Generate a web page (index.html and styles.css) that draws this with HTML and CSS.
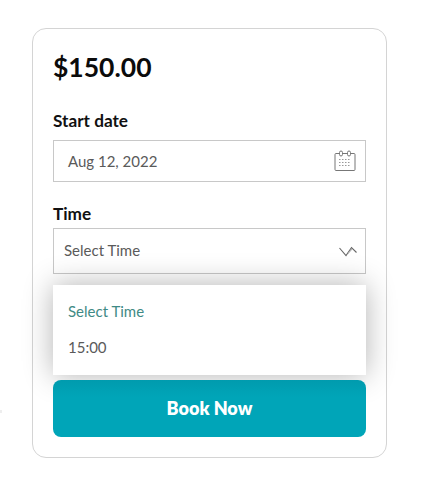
FILE: index.html
```html
<!DOCTYPE html>
<html lang="en">
<head>
<meta charset="utf-8">
<title>Book</title>
<link rel="stylesheet" href="styles.css">
</head>
<body>
<span class="speck"></span>
<main class="card">
  <div class="price">$150.00</div>
  <label class="label label-date">Start date</label>
  <div class="field date-field">
    <span>Aug 12, 2022</span>
    <svg class="cal" width="22" height="22" viewBox="0 0 22 22" fill="none" stroke="#777" stroke-width="1">
      <path d="M5.500 3.500H2a1 1 0 0 0-1 1v15a1 1 0 0 0 1 1h18a1 1 0 0 0 1-1v-15a1 1 0 0 0-1-1h-3.500M8.500 3.500h5"/>
      <rect x="5.500" y="1" width="3" height="5" rx="1.500"/>
      <rect x="13.500" y="1" width="3" height="5" rx="1.500"/>
      <path d="M5 9.500h12M5 12.500h12M5 15.500h12" stroke-dasharray="1.500 1.500" stroke="#999"/>
    </svg>
  </div>
  <label class="label label-time">Time</label>
  <div class="select-wrap">
    <div class="field select-field">
      <span>Select Time</span>
      <svg class="chev" width="18" height="11" viewBox="0 0 18 11" fill="none" stroke="#666" stroke-width="1.100">
        <path d="M0.500 2 7 9.500 12.500 1.500 17.500 6.500"/>
        <path d="M9 7.500 13 3" stroke="#aaa"/>
      </svg>
    </div>
    <ul class="menu">
      <li class="opt opt-active">Select Time</li>
      <li class="opt">15:00</li>
    </ul>
  </div>
  <button class="book">Book Now</button>
</main>
</body>
</html>
```
FILE: styles.css
```css
* { box-sizing: border-box; }
html, body { margin: 0; background: #fff; }
body {
  width: 421px;
  height: 489px;
  padding: 28px 0 0 32px;
  font-family: "Lato", "Open Sans", sans-serif;
  overflow: hidden;
  position: relative;
}
.speck {
  position: absolute;
  left: 0;
  top: 410px;
  width: 2px;
  height: 3px;
  background: #eee;
}
.card {
  width: 355px;
  height: 430px;
  border: 1px solid #d4d4d4;
  border-radius: 14px;
  padding: 21px 20px 20px;
  background: #fff;
  display: flex;
  flex-direction: column;
}
.price {
  font-size: 26.500px;
  line-height: 34px;
  font-weight: 700;
  color: #0b0b0b;
  height: 34px;
}
.label {
  display: block;
  font-size: 17.200px;
  line-height: 22px;
  font-weight: 700;
  color: #111;
}
.label-date { margin-top: 26px; }
.label-time { margin-top: 21px; }
.field {
  border: 1px solid #c8c8c8;
  display: flex;
  align-items: center;
  justify-content: space-between;
  color: #5a5a5a;
  font-size: 15px;
  background: #fff;
}
.date-field {
  margin-top: 8px;
  height: 42px;
  padding: 0 9px 0 14px;
}
.select-wrap { position: relative; margin-top: 3px; }
.select-field {
  height: 46px;
  padding: 0 8px 2px 10px;
}
.chev { margin-top: 3px; }
.menu {
  position: absolute;
  left: 0;
  right: 0;
  top: 57px;
  height: 90px;
  margin: 0;
  padding: 8px 0 0 15px;
  list-style: none;
  background: #fff;
  box-shadow: 0 0 28px rgba(0, 0, 0, 0.3);
  font-size: 15px;
}
.opt { height: 36px; line-height: 36px; color: #5a5a5a; }
.opt-active { color: #3f8a85; }
.book {
  margin-top: 106px;
  height: 57px;
  padding: 0 0 2px;
  border: 0;
  border-radius: 8px;
  background: linear-gradient(#009bae, #00a5b8 30%);
  color: #fff;
  font-family: inherit;
  font-size: 18px;
  font-weight: 800;
  position: relative;
}
```
